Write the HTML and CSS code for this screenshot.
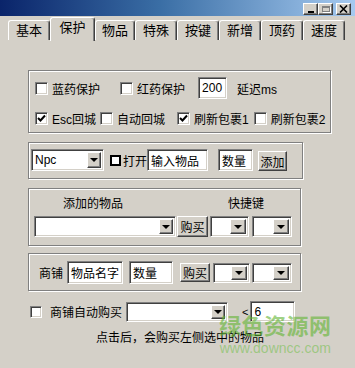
FILE: index.html
```html
<!DOCTYPE html>
<html lang="zh-CN">
<head>
    <meta charset="UTF-8">
    <title>保护设置</title>
    <link rel="stylesheet" href="styles.css">
</head>
<body>
    <div class="window">
        <!-- Title bar -->
        <div class="titlebar">
            <span class="cap-btn"><span class="glyph-min"></span></span>
            <span class="cap-btn"><span class="glyph-max"></span></span>
            <span class="cap-btn cap-close">
                <svg width="9" height="8" viewBox="0 0 9 8"><path d="M1 0.5 L8 7.5 M8 0.5 L1 7.5" stroke="#000" stroke-width="1.6"/></svg>
            </span>
        </div>

        <!-- Tabs -->
        <div class="tabs">
            <span class="tab">基本</span>
            <span class="tab active">保护</span>
            <span class="tab narrow">物品</span>
            <span class="tab">特殊</span>
            <span class="tab">按键</span>
            <span class="tab">新增</span>
            <span class="tab">顶药</span>
            <span class="tab">速度</span>
        </div>

        <div class="page">
            <!-- Protection options -->
            <div class="group g-protect">
                <div class="row row-top">
                    <label class="check"><span class="box"></span><span>蓝药保护</span></label>
                    <label class="check ml-20"><span class="box"></span><span>红药保护</span></label>
                    <span class="edit edit-delay">200</span>
                    <span class="unit">延迟ms</span>
                </div>
                <div class="row row-bottom">
                    <label class="check"><span class="box checked"><svg width="9" height="9" viewBox="0 0 9 9"><path d="M1 4 L3.5 6.5 L8 1.5" fill="none" stroke="#000" stroke-width="2"/></svg></span><span>Esc回城</span></label>
                    <label class="check ml-4"><span class="box"></span><span>自动回城</span></label>
                    <label class="check ml-12"><span class="box checked"><svg width="9" height="9" viewBox="0 0 9 9"><path d="M1 4 L3.5 6.5 L8 1.5" fill="none" stroke="#000" stroke-width="2"/></svg></span><span>刷新包裹1</span></label>
                    <label class="check ml-5"><span class="box"></span><span>刷新包裹2</span></label>
                </div>
            </div>

            <!-- Npc / open -->
            <div class="group g-npc">
                <div class="row">
                    <span class="combo combo-npc"><span class="combo-text">Npc</span><span class="drop"><span class="arrow"></span></span></span>
                    <label class="check check-open"><span class="box flat"></span><span>打开</span></label>
                    <span class="edit edit-item">输入物品</span>
                    <span class="edit edit-count">数量</span>
                    <span class="btn btn-add">添加</span>
                </div>
            </div>

            <!-- Added items -->
            <div class="group g-added">
                <div class="row row-labels">
                    <span class="label-added">添加的物品</span>
                    <span class="label-hotkey">快捷键</span>
                </div>
                <div class="row row-added">
                    <span class="combo combo-items"><span class="combo-text"></span><span class="drop"><span class="arrow"></span></span></span>
                    <span class="btn btn-buy">购买</span>
                    <span class="combo combo-key"><span class="combo-text"></span><span class="drop"><span class="arrow"></span></span></span>
                    <span class="combo combo-key2"><span class="combo-text"></span><span class="drop"><span class="arrow"></span></span></span>
                </div>
            </div>

            <!-- Shop -->
            <div class="group g-shop">
                <div class="row">
                    <span>商铺</span>
                    <span class="edit edit-name">物品名字</span>
                    <span class="edit edit-shop-count">数量</span>
                    <span class="btn btn-shop-buy">购买</span>
                    <span class="combo combo-key combo-shop1"><span class="combo-text"></span><span class="drop"><span class="arrow"></span></span></span>
                    <span class="combo combo-key2 combo-shop2"><span class="combo-text"></span><span class="drop"><span class="arrow"></span></span></span>
                </div>
            </div>

            <!-- Auto buy -->
            <div class="row row-auto">
                <span class="box box-auto"></span>
                <span class="auto-label">商铺自动购买</span>
                <span class="combo combo-auto"><span class="combo-text"></span><span class="drop"><span class="arrow"></span></span></span>
                <span class="lt">&lt;</span>
                <span class="edit edit-limit">6</span>
            </div>

            <p class="hint">点击后，会购买左侧选中的物品</p>
        </div>

        <!-- Watermark over the corner -->
        <div class="watermark">
            <span class="wm-name">绿色资源网</span>
            <span class="wm-url">www.downcc.com</span>
        </div>
    </div>
</body>
</html>
```

FILE: styles.css
```css
body {
    margin: 0;
    background-color: #d4d0c8;
    font-family: "Liberation Sans", "Noto Sans CJK SC", sans-serif;
    font-size: 12px;
    color: #000;
}

.window {
    position: relative;
    width: 355px;
    height: 368px;
    overflow: hidden;
}

/* Title bar */
.titlebar {
    height: 16px;
    box-sizing: border-box;
    padding: 3px 4px 0 0;
    display: flex;
    justify-content: flex-end;
    align-items: flex-start;
    background: linear-gradient(to right, #0a246a, #3a6ea5 45%, #a6caf0);
}

.cap-btn {
    width: 15px;
    height: 12px;
    box-sizing: border-box;
    background-color: #d4d0c8;
    border: 1px solid;
    border-color: #fff #404040 #404040 #fff;
    box-shadow: inset -1px -1px #808080;
    display: flex;
    align-items: center;
    justify-content: center;
}

.cap-close {
    margin-left: 3px;
}

.glyph-min {
    width: 6px;
    height: 2px;
    background-color: #000;
    margin-top: 5px;
}

.glyph-max {
    width: 8px;
    height: 6px;
    box-sizing: border-box;
    border: 1px solid #808080;
    border-top-width: 2px;
    box-shadow: 1px 1px #fff;
}

/* Tabs */
.tabs {
    height: 24px;
    margin-top: 1px;
    padding-left: 8px;
    display: flex;
    align-items: flex-end;
}

.tab {
    width: 42px;
    height: 20px;
    margin-bottom: 1px;
    box-sizing: border-box;
    border-top: 1px solid #fff;
    border-left: 1px solid #fff;
    border-right: 1px solid #404040;
    box-shadow: inset -1px 0 #808080;
    border-radius: 3px 3px 0 0;
    font-size: 13px;
    line-height: 19px;
    text-align: center;
}

.tab.active {
    width: 45px;
    height: 24px;
    margin-bottom: 0;
    line-height: 20px;
}

.tab.narrow {
    width: 40px;
}

/* Page */
.page {
    padding: 29px 0 0 28px;
}

.group {
    box-sizing: border-box;
    border: 1px solid #808080;
    box-shadow: inset 1px 1px #fff, 1px 1px #fff;
}

.row {
    display: flex;
    align-items: center;
}

.g-protect {
    width: 303px;
    height: 63px;
    padding: 6px 0 0 6px;
}

.row-top {
    height: 22px;
}

.row-bottom {
    height: 14px;
    margin-top: 12px;
}

.g-npc {
    width: 275px;
    height: 37px;
    margin-top: 9px;
    padding: 6px 0 0 2px;
}

.g-npc .row {
    height: 22px;
}

.g-added {
    width: 273px;
    height: 58px;
    margin-top: 9px;
    padding: 6px 0 0 5px;
}

.row-labels {
    height: 14px;
}

.row-added {
    height: 21px;
    margin-top: 7px;
}

.g-shop {
    width: 273px;
    height: 38px;
    margin-top: 7px;
    padding: 7px 0 0 10px;
}

.g-shop .row {
    height: 23px;
}

/* Controls */
.check {
    display: flex;
    align-items: center;
    gap: 4px;
}

.ml-4 { margin-left: 4px; }
.ml-5 { margin-left: 5px; }
.ml-12 { margin-left: 12px; }
.ml-20 { margin-left: 20px; }

.box {
    width: 13px;
    height: 13px;
    box-sizing: border-box;
    background-color: #fff;
    border: 1px solid;
    border-color: #808080 #fff #fff #808080;
    box-shadow: inset 1px 1px #404040, inset -1px -1px #d4d0c8;
    display: flex;
    align-items: center;
    justify-content: center;
}

.box.flat {
    width: 11px;
    height: 11px;
    border: 2px solid #000;
    box-shadow: none;
}

.edit {
    box-sizing: border-box;
    background-color: #fff;
    border: 1px solid;
    border-color: #808080 #fff #fff #808080;
    box-shadow: inset 1px 1px #404040, inset -1px -1px #d4d0c8;
    padding: 0 2px 0 3px;
    display: flex;
    align-items: center;
    white-space: nowrap;
    overflow: hidden;
}

.btn {
    box-sizing: border-box;
    background-color: #d4d0c8;
    border: 1px solid;
    border-color: #fff #404040 #404040 #fff;
    box-shadow: inset -1px -1px #808080;
    display: flex;
    align-items: center;
    justify-content: center;
}

.combo {
    box-sizing: border-box;
    background-color: #fff;
    border: 1px solid;
    border-color: #808080 #fff #fff #808080;
    box-shadow: inset 1px 1px #404040, inset -1px -1px #d4d0c8;
    padding: 2px;
    display: flex;
    align-items: stretch;
}

.combo-text {
    flex: 1;
    padding-left: 1px;
    display: flex;
    align-items: center;
}

.drop {
    width: 14px;
    box-sizing: border-box;
    background-color: #d4d0c8;
    border: 1px solid;
    border-color: #fff #404040 #404040 #fff;
    box-shadow: inset -1px -1px #808080;
    display: flex;
    align-items: center;
    justify-content: center;
}

.arrow {
    width: 0;
    height: 0;
    border-left: 4px solid transparent;
    border-right: 4px solid transparent;
    border-top: 4px solid #000;
}

/* Protection row */
.edit-delay {
    width: 29px;
    height: 22px;
    margin-left: 13px;
}

.unit {
    margin-left: 10px;
}

/* Npc row */
.combo-npc {
    width: 73px;
    height: 22px;
}

.check-open {
    margin-left: 6px;
    gap: 2px;
}

.edit-item {
    width: 61px;
    height: 22px;
}

.edit-count {
    width: 35px;
    height: 22px;
    margin-left: 10px;
}

.btn-add {
    width: 29px;
    height: 20px;
    margin-left: 5px;
    margin-top: 2px;
}

/* Added items */
.label-added {
    margin-left: 29px;
}

.label-hotkey {
    margin-left: 105px;
}

.combo-items {
    width: 142px;
    height: 21px;
}

.btn-buy {
    width: 31px;
    height: 21px;
    margin-left: 1px;
}

.combo-key {
    width: 39px;
    height: 21px;
    margin-left: 2px;
}

.combo-key2 {
    width: 40px;
    height: 21px;
    margin-left: 3px;
}

.combo-key .drop,
.combo-key2 .drop {
    width: 16px;
}

/* Shop */
.edit-name {
    width: 56px;
    height: 23px;
    margin-left: 4px;
}

.edit-shop-count {
    width: 44px;
    height: 23px;
    margin-left: 6px;
}

.btn-shop-buy {
    width: 30px;
    height: 19px;
    margin-left: 7px;
}

.combo-shop1 {
    width: 37px;
    height: 20px;
    margin-left: 3px;
}

.combo-shop2 {
    height: 20px;
    margin-left: 2px;
}

/* Auto buy */
.row-auto {
    height: 21px;
    margin-top: 10px;
}

.box-auto {
    width: 12px;
    height: 12px;
    margin-left: 2px;
    margin-top: 1px;
}

.auto-label {
    margin-left: 8px;
}

.combo-auto {
    width: 102px;
    height: 20px;
    margin-left: 4px;
}

.lt {
    margin-left: 14px;
    font-size: 11px;
}

.edit-limit {
    width: 45px;
    height: 21px;
    margin-left: 2px;
}

.hint {
    margin: 9px 0 0 68px;
    line-height: 14px;
}

/* Watermark */
.watermark {
    position: absolute;
    left: 219px;
    top: 313px;
    display: flex;
    flex-direction: column;
    align-items: center;
    color: rgba(96, 180, 50, 0.6);
}

.wm-name {
    font-size: 22px;
    font-weight: bold;
    letter-spacing: 0.5px;
    line-height: 28px;
}

.wm-url {
    font-size: 14px;
    line-height: 15px;
    color: rgba(110, 190, 70, 0.55);
}
```
